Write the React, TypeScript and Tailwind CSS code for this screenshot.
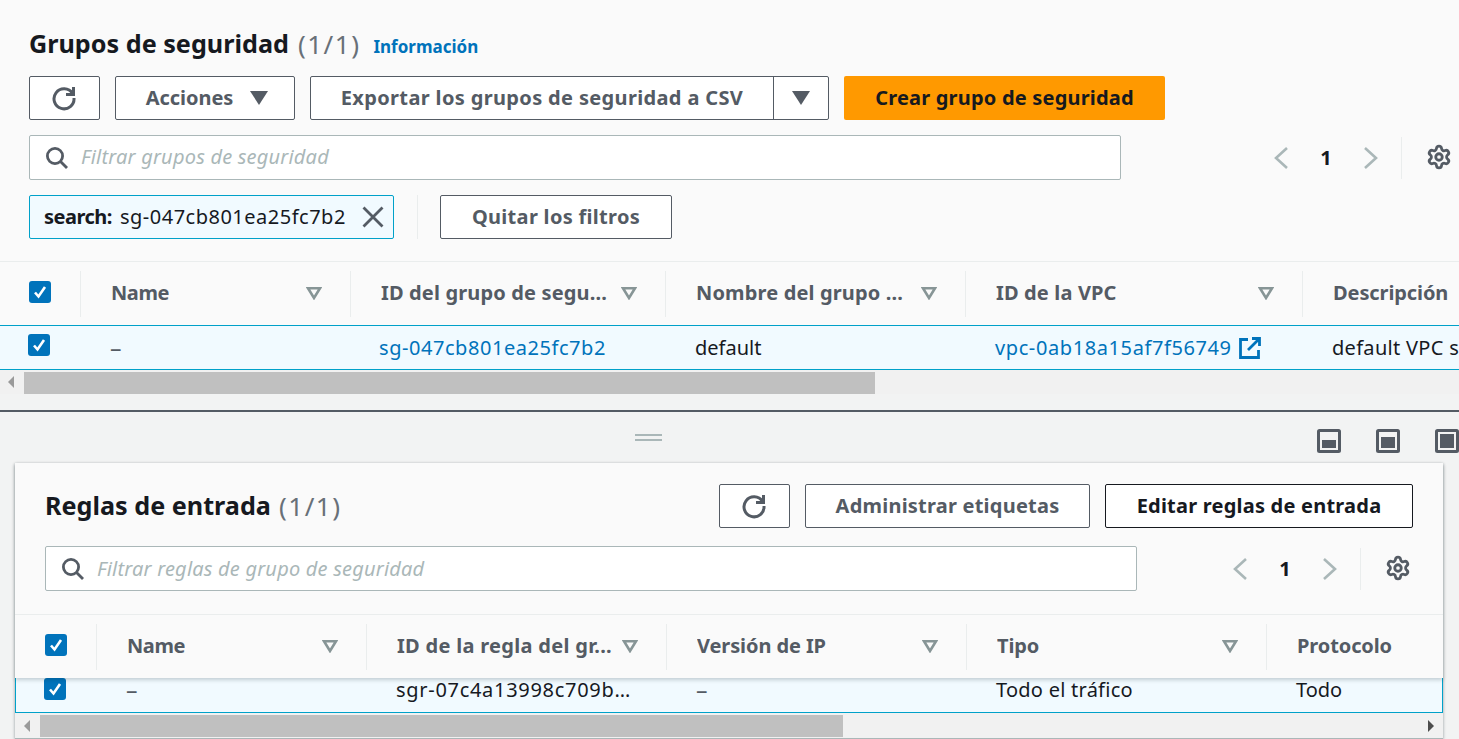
import React from "react";
import { Settings } from "lucide-react";

const Refresh = () => (
  <svg width="26" height="26" viewBox="0 0 26 26" fill="none" stroke="#545b64" strokeWidth="3" className="ml-[-2px]">
    <path d="M21.5 8.5A10 10 0 1 0 23 13" />
    <path d="M22.5 2v7.5H15" strokeLinejoin="miter" />
  </svg>
);
const Search = () => (
  <svg width="24" height="24" viewBox="0 0 24 24" fill="none" stroke="#545b64" strokeWidth="2.8">
    <circle cx="10" cy="10" r="7.6" />
    <path d="M15.5 15.5L22 22" />
  </svg>
);
const Caret = () => (
  <svg width="18" height="14" viewBox="0 0 18 14"><path d="M0 0h18L9 14z" fill="#545b64" /></svg>
);
const SortIcon = () => (
  <svg width="16" height="13" viewBox="0 0 16 13" className="shrink-0">
    <path d="M2 1.3h12L8 11z" fill="none" stroke="#879596" strokeWidth="2.6" />
  </svg>
);
const Check = () => (
  <span className="flex h-[22px] w-[22px] shrink-0 items-center justify-center rounded-[3px] bg-[#0073bb]">
    <svg width="16" height="16" viewBox="0 0 16 16" fill="none" stroke="#fff" strokeWidth="2.6"><path d="M3 8.5L6.5 12.5L13 3" /></svg>
  </span>
);
const External = () => (
  <svg width="22" height="22" viewBox="0 0 22 22" fill="none" stroke="#0073bb" strokeWidth="2.8" className="shrink-0">
    <path d="M9 2.5H1.5v18h18V13" />
    <path d="M13 1.5h7.5V9M20 2L9 13" />
  </svg>
);
const PanelIcon = ({ inner }: { inner: string }) => (
  <svg width="24" height="24" viewBox="0 0 24 24">
    <rect x="0" y="0" width="24" height="24" rx="2.5" fill="#545b64" />
    <rect x="3" y="3" width="18" height="18" fill="#f2f3f3" />
    <path d={inner} fill="#545b64" />
  </svg>
);
const Close = () => (
  <svg width="22" height="22" viewBox="0 0 22 22" fill="none" stroke="#545b64" strokeWidth="2.8" className="shrink-0">
    <path d="M1.5 1.5l19 19M20.5 1.5l-19 19" />
  </svg>
);
const Chevron = ({ left }: { left?: boolean }) => (
  <svg width="14" height="22" viewBox="0 0 14 22" fill="none" stroke="#aab7b8" strokeWidth="2.6" className="shrink-0">
    <path d={left ? "M13 1L2 11l11 10" : "M1 1l11 10L1 21"} />
  </svg>
);

const Btn = ({ className, children }: { className: string; children: React.ReactNode }) => (
  <button className={`flex h-[44px] items-center justify-center rounded-[2px] border border-[#545b64] bg-white text-[20px] font-bold tracking-[0.22px] text-[#545b64] ${className}`}>
    {children}
  </button>
);

const Filter = ({ placeholder, className, textClass }: { placeholder: string; className: string; textClass: string }) => (
  <div className={`flex h-[45px] shrink-0 items-center gap-[12px] rounded-[2px] border border-[#aab7b8] bg-white pl-[15px] ${className}`}>
    <Search />
    <span className={`text-[20px] italic tracking-[0.2px] text-[#aab7b8] ${textClass}`}>{placeholder}</span>
  </div>
);

const Pager = ({ className }: { className: string }) => (
  <div className={`flex h-[44px] shrink-0 items-center ${className}`}>
    <span className="flex w-[32px] justify-center"><Chevron left /></span>
    <span className="w-[58px] text-center text-[20px] font-bold text-[#16191f]">1</span>
    <span className="flex w-[32px] justify-center"><Chevron /></span>
    <div className="ml-[14px] h-[42px] w-px bg-[#eaeded]" />
    <Settings size={26} strokeWidth={2.6} color="#545b64" className="ml-[24px] mt-[-1px]" />
  </div>
);

const Head = ({ w, label, sort = true, track = "tracking-[-0.1px]" }: { w: string; label: string; sort?: boolean; track?: string }) => (
  <div className={`flex h-[46px] shrink-0 items-center justify-between border-r border-[#eaeded] pl-[30px] pr-[28px] ${w}`}>
    <span className={`mt-[-2px] truncate text-[20px] font-bold text-[#545b64] ${track}`}>{label}</span>
    {sort && <SortIcon />}
  </div>
);

const ScrollArrow = ({ dir }: { dir: "l" | "r" }) => (
  <svg width="8" height="14" viewBox="0 0 8 14" className="shrink-0">
    <path d={dir === "l" ? "M7 1v12L1 7z" : "M1 1v12l6-6z"} fill={dir === "l" ? "#9a9a9a" : "#4d4d4d"} />
  </svg>
);

export default function App() {
  return (
    <div className="flex h-[739px] w-[1459px] flex-col overflow-hidden bg-[#f2f3f3] font-['Noto_Sans',sans-serif] text-[20px] text-[#16191f]">
      {/* Upper table */}
      <section className="h-[410px] shrink-0">
        <div className="h-[261px] bg-[#fafafa] px-[29px] pt-[26px]">
          <div className="flex h-[36px] items-center">
            <h1 className="text-[25.2px] font-bold leading-none">Grupos de seguridad</h1>
            <span className="ml-[9px] text-[26px] leading-none tracking-[1.5px] text-[#687078]">(1/1)</span>
            <span className="ml-[13px] mt-[5px] text-[17px] font-bold text-[#0073bb]">Información</span>
          </div>
          <div className="mt-[14px] flex h-[44px] gap-[15px]">
            <Btn className="w-[71px]"><Refresh /></Btn>
            <Btn className="w-[180px] gap-[17px] pl-[4px] !tracking-[-0.05px]">Acciones <Caret /></Btn>
            <div className="flex h-[44px] w-[519px] rounded-[2px] border border-[#545b64] bg-white text-[#545b64]">
              <div className="flex w-[463px] items-center justify-center border-r border-[#545b64] text-[20px] font-bold tracking-[0.35px]">Exportar los grupos de seguridad a CSV</div>
              <div className="flex flex-1 items-center justify-center"><Caret /></div>
            </div>
            <button className="flex h-[44px] w-[321px] items-center justify-center rounded-[2px] bg-[#ff9900] text-[20px] font-bold tracking-[0.2px] text-[#16191f]">Crear grupo de seguridad</button>
          </div>
          <div className="mt-[15px] flex items-center">
            <Filter placeholder="Filtrar grupos de seguridad" className="w-[1092px]" textClass="mt-[-2px]" />
            <Pager className="ml-[144px]" />
          </div>
          <div className="mt-[15px] flex h-[44px] items-center">
            <div className="flex h-[44px] w-[365px] items-center rounded-[2px] border border-[#00a1c9] bg-[#f1faff] pl-[14px]">
              <span className="font-bold tracking-[-0.5px]">search:</span>
              <span className="ml-[8px] tracking-[0.5px]">sg-047cb801ea25fc7b2</span>
              <span className="ml-auto mr-[9px]"><Close /></span>
            </div>
            <div className="ml-[23px] h-[44px] w-px bg-[#eaeded]" />
            <Btn className="ml-[22px] w-[232px] !tracking-[0.3px]">Quitar los filtros</Btn>
          </div>
        </div>
        <div className="overflow-hidden border-t border-[#eaeded] bg-[#fafafa]">
          <div className="flex h-[63px] w-[1600px] items-center">
            <div className="flex h-[46px] w-[81px] shrink-0 items-center border-r border-[#eaeded] pl-[29px]"><div className="mt-[-3px]"><Check /></div></div>
            <Head w="w-[270px]" label="Name" track="tracking-[-0.4px]" />
            <Head w="w-[315px]" label="ID del grupo de segu..." track="tracking-[0.15px]" />
            <Head w="w-[300px]" label="Nombre del grupo ..." track="tracking-[0.15px]" />
            <Head w="w-[337px]" label="ID de la VPC" track="tracking-[0.15px]" />
            <Head w="w-[300px]" label="Descripción" sort={false} />
          </div>
          <div className="flex h-[45px] w-[1600px] items-center border-y border-[#00a1c9] bg-[#f1faff]">
            <div className="w-[81px] shrink-0 pl-[28px]"><div className="mb-[5px]"><Check /></div></div>
            <div className="w-[270px] shrink-0 pl-[29px] text-[23px] leading-[27px] text-[#545b64]">–</div>
            <div className="w-[315px] shrink-0 pl-[28px] tracking-[0.55px] text-[#0073bb]">sg-047cb801ea25fc7b2</div>
            <div className="w-[300px] shrink-0 pl-[29px]">default</div>
            <div className="flex w-[337px] shrink-0 items-center gap-[7px] pl-[29px] tracking-[0.6px] text-[#0073bb]">vpc-0ab18a15af7f56749 <External /></div>
            <div className="w-[300px] shrink-0 whitespace-nowrap pl-[29px] tracking-[0.3px]">default VPC security group</div>
          </div>
        </div>
        <div className="flex h-[24px] items-center bg-[#f1f1f1]">
          <div className="ml-[7px]"><ScrollArrow dir="l" /></div>
          <div className="ml-[9px] mt-[2px] h-[22px] w-[851px] bg-[#c0c0c0]" />
        </div>
      </section>
      <div className="h-[2px] shrink-0 bg-[#545b64]" />

      {/* Lower split panel */}
      <section className="flex min-h-0 flex-1 flex-col">
        <div className="relative flex h-[51px] shrink-0 items-start justify-end">
          <div className="absolute left-[635px] top-[22px] h-[7px] w-[27px] border-y-2 border-[#aab7b8]" />
          <div className="mt-[17px] flex gap-[35px]">
            <PanelIcon inner="M5 11h14v8H5z" />
            <PanelIcon inner="M5 8h14v11H5z" />
            <PanelIcon inner="M5 5h14v14H5z" />
          </div>
        </div>
        <div className="relative ml-[15px] flex h-[276px] w-[1428px] flex-col bg-[#f1f1f1] shadow-[0_1px_3px_rgba(0,28,36,0.4)]">
          <div className="relative z-10 h-[215px] shrink-0 bg-[#fafafa] shadow-[0_2px_4px_rgba(0,28,36,0.2)]">
            <div className="px-[30px]">
              <div className="flex h-[65px] items-center pt-[21px]">
                <h2 className="text-[25.2px] font-bold leading-none">Reglas de entrada</h2>
                <span className="ml-[8px] text-[26px] leading-none tracking-[1.5px] text-[#687078]">(1/1)</span>
                <div className="ml-auto flex gap-[15px]">
                  <Btn className="w-[71px]"><Refresh /></Btn>
                  <Btn className="w-[285px]">Administrar etiquetas</Btn>
                  <Btn className="w-[308px] !border-[#16191f] !text-[#16191f]">Editar reglas de entrada</Btn>
                </div>
              </div>
              <div className="mt-[18px] flex items-center">
                <Filter placeholder="Filtrar reglas de grupo de seguridad" className="w-[1092px]" textClass="" />
                <Pager className="ml-[87px]" />
              </div>
            </div>
            <div className="mt-[23px] flex h-[64px] items-center overflow-hidden border-t border-[#eaeded]">
              <div className="flex h-[46px] w-[82px] shrink-0 items-center border-r border-[#eaeded] pl-[30px]"><div className="mt-[-3px]"><Check /></div></div>
              <Head w="w-[270px]" label="Name" track="tracking-[-0.4px]" />
              <Head w="w-[300px]" label="ID de la regla del gr..." track="tracking-[0.3px]" />
              <Head w="w-[300px]" label="Versión de IP" />
              <Head w="w-[300px]" label="Tipo" />
              <Head w="w-[176px] !border-r-0" label="Protocolo" sort={false} />
            </div>
          </div>
          <div className="flex h-[35px] shrink-0 border-x border-b border-[#00a1c9] bg-[#f1faff]">
            <div className="w-[81px] shrink-0 pl-[28px]"><Check /></div>
            <div className="mt-[-3px] w-[270px] shrink-0 pl-[29px] text-[23px] leading-[28px] text-[#545b64]">–</div>
            <div className="mt-[-2px] w-[300px] shrink-0 pl-[29px] leading-[28px] tracking-[0.7px]">sgr-07c4a13998c709b…</div>
            <div className="mt-[-3px] w-[300px] shrink-0 pl-[29px] text-[23px] leading-[28px] text-[#545b64]">–</div>
            <div className="mt-[-2px] w-[300px] shrink-0 pl-[29px] leading-[28px] tracking-[0.25px]">Todo el tráfico</div>
            <div className="mt-[-2px] w-[170px] shrink-0 pl-[29px] leading-[28px]">Todo</div>
          </div>
          <div className="flex h-[26px] shrink-0 items-start border-b border-[#aab7b8] bg-[#f1f1f1]">
            <div className="ml-[8px] mt-[6px]"><ScrollArrow dir="l" /></div>
            <div className="ml-[9px] mt-[2px] h-[22px] w-[803px] bg-[#c0c0c0]" />
            <div className="ml-auto mr-[8px] mt-[6px]"><ScrollArrow dir="r" /></div>
          </div>
        </div>
      </section>
    </div>
  );
}
